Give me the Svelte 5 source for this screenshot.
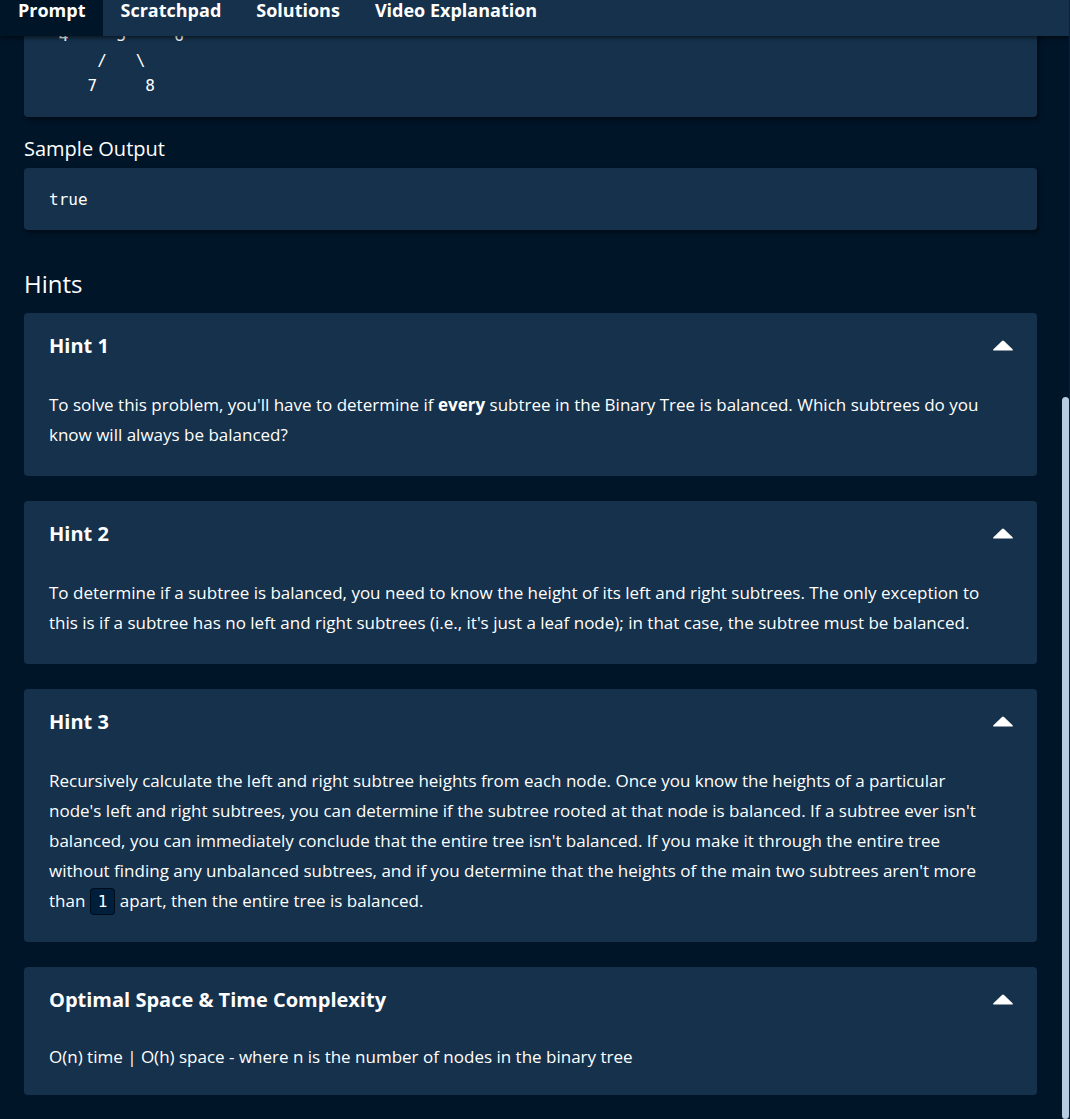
<script>
  const tabs = ['Prompt', 'Scratchpad', 'Solutions', 'Video Explanation'];
  let active = $state('Prompt');
  let open = $state([true, true, true, true]);

  const tree = ' 4     5     6\n     /   \\\n    7     8';
</script>

{#snippet header(index, title)}
  <h3>
    <button
      class="toggle"
      type="button"
      aria-expanded={open[index]}
      aria-controls={`panel-${index}`}
      onclick={() => (open[index] = !open[index])}
    >
      <span>{title}</span>
      <svg class:closed={!open[index]} width="20" height="11" viewBox="0 0 20 11" aria-hidden="true">
        <path d="M1 10.6Q-.3 10.5.4 9.3L9 .9Q10 0 11 .9L19.6 9.3Q20.3 10.5 19 10.6Z" fill="#fff" />
      </svg>
    </button>
  </h3>
{/snippet}

<div class="page">
  <nav>
    {#each tabs as tab}
      <button type="button" class="tab" class:active={active === tab} onclick={() => (active = tab)}>{tab}</button>
    {/each}
  </nav>

  <main>
    <pre class="sample first">{tree}</pre>
    <h4>Sample Output</h4>
    <pre class="sample">true</pre>

    <h2>Hints</h2>
    <div class="cards">
      <section class="card">
        {@render header(0, 'Hint 1')}
        {#if open[0]}
          <p id="panel-0">
            To solve this problem, you'll have to determine if <strong>every</strong> subtree in the Binary Tree is
            balanced. Which subtrees do you know will always be balanced?
          </p>
        {/if}
      </section>
      <section class="card">
        {@render header(1, 'Hint 2')}
        {#if open[1]}
          <p id="panel-1">
            To determine if a subtree is balanced, you need to know the height of its left and right subtrees. The only
            exception to this is if a subtree has no left and right subtrees (i.e., it's just a leaf node); in that
            case, the subtree must be balanced.
          </p>
        {/if}
      </section>
      <section class="card">
        {@render header(2, 'Hint 3')}
        {#if open[2]}
          <p id="panel-2">
            Recursively calculate the left and right subtree heights from each node. Once you know the heights of a
            particular node's left and right subtrees, you can determine if the subtree rooted at that node is balanced.
            If a subtree ever isn't balanced, you can immediately conclude that the entire tree isn't balanced. If you
            make it through the entire tree without finding any unbalanced subtrees, and if you determine that the
            heights of the main two subtrees aren't more than <code>1</code> apart, then the entire tree is balanced.
          </p>
        {/if}
      </section>
      <section class="card compact">
        {@render header(3, 'Optimal Space & Time Complexity')}
        {#if open[3]}
          <p id="panel-3">O(n) time | O(h) space - where n is the number of nodes in the binary tree</p>
        {/if}
      </section>
    </div>
  </main>
  <div class="thumb"></div>
</div>

<style>
  :global(body) {
    background: #001528;
  }
  .page {
    position: relative;
    box-sizing: border-box;
    min-height: 100vh;
    overflow: hidden;
    border-right: 1px solid #0a1f38;
    background: #001528;
    color: #fff;
    font-family: 'Open Sans', sans-serif;
    font-size: 18px;
    line-height: 30px;
  }
  button {
    margin: 0;
    border: 0;
    background: none;
    color: inherit;
    font: inherit;
    cursor: pointer;
  }
  nav {
    position: relative;
    z-index: 1;
    display: flex;
    height: 36px;
    background: #15314b;
    box-shadow: 0 2px 4px rgba(0, 0, 0, 0.5);
  }
  .tab {
    padding: 0 17px 16px 18px;
    font-weight: 700;
    line-height: 20px;
    white-space: nowrap;
  }
  .tab.active {
    background: #001528;
  }
  main {
    padding: 0 32px 24px 24px;
  }
  pre,
  code {
    font-family: 'DejaVu Sans Mono', monospace;
    font-size: 16px;
  }
  .sample {
    margin: 0;
    padding: 19px 25px 18px;
    border-radius: 4px;
    background: #15314b;
    box-shadow: 2px 3px 4px rgba(0, 0, 0, 0.45);
    line-height: 25px;
  }
  .sample.first {
    margin-top: -32px;
    padding-bottom: 19px;
  }
  h2,
  h3,
  h4,
  p {
    margin: 0;
  }
  h4 {
    padding: 17px 0 4px;
    font-size: 20px;
    font-weight: 400;
  }
  h2 {
    padding: 39px 0 14px;
    font-size: 24px;
    font-weight: 400;
  }
  .cards {
    display: grid;
    gap: 25px;
  }
  .card {
    border-radius: 4px;
    background: #15314b;
  }
  .toggle {
    display: flex;
    align-items: center;
    justify-content: space-between;
    width: 100%;
    height: 65px;
    padding: 0 24px 0 25px;
    font-size: 20px;
    font-weight: 700;
    text-align: left;
  }
  .closed {
    transform: rotate(180deg);
  }
  p {
    padding: 12px 45px 26px 25px;
    font-size: 17px;
  }
  .compact p {
    padding-top: 10px;
    padding-bottom: 23px;
  }
  code {
    padding: 3px 7px;
    border: 1px solid #000c18;
    border-radius: 4px;
    background: #001f3c;
    line-height: 20px;
  }
  .thumb {
    position: absolute;
    right: 0;
    bottom: 0;
    width: 7px;
    height: 64.5%;
    border-radius: 4px;
    background: #b8cce0;
  }
</style>
